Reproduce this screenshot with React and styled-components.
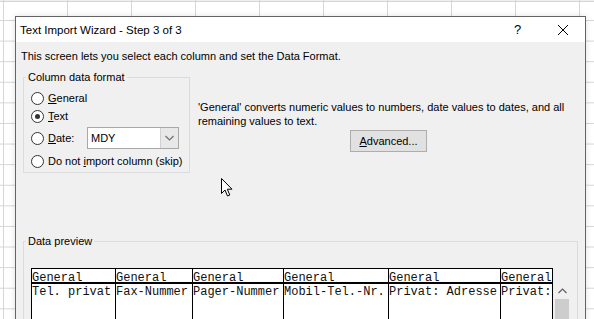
import styled, { createGlobalStyle } from 'styled-components';

const uiFont = '"Liberation Sans", Arial, sans-serif';
const monoFont = '"Liberation Mono", "Courier New", monospace';

const GlobalStyle = createGlobalStyle`
  html, body {
    margin: 0;
    padding: 0;
    height: 100%;
    overflow: hidden;
  }
  body {
    background-color: #fff;
    background-image:
      linear-gradient(#d6d6d6, #d6d6d6),
      linear-gradient(to right, #d6d6d6 1px, transparent 1px),
      linear-gradient(to bottom, #d6d6d6 1px, transparent 1px);
    background-size: 100% 1px, 64px 100%, 100% 20.6px;
    background-position: 0 1px, 3px 0, 0 20px;
    background-repeat: no-repeat, repeat-x, repeat-y;
    font-family: ${uiFont};
  }
`;

const Screen = styled.div`
  position: relative;
  box-sizing: border-box;
  height: 319px;
  padding: 16px 0 0 15px;
`;

const Dialog = styled.div`
  width: 571px;
  height: 320px;
  box-sizing: border-box;
  border: 1px solid #646464;
  border-bottom: none;
  background: #f0f0f0;
  display: flex;
  flex-direction: column;
  box-shadow: 0 0 6px rgba(0, 0, 0, 0.12);
`;

const TitleBar = styled.div`
  height: 25px;
  flex: none;
  background: #fff;
  display: flex;
  align-items: center;
`;

const Title = styled.div`
  flex: 1;
  padding-left: 4px;
  font-size: 11.5px;
  color: #000;
`;

const TitleButton = styled.div`
  width: 45px;
  height: 25px;
  display: flex;
  align-items: center;
  justify-content: center;
  font-size: 13px;
  color: #000;
`;

const Body = styled.div`
  flex: 1;
  padding: 7px 0 0 5px;
  font-size: 11px;
  color: #000;
`;

const Intro = styled.div`
  line-height: 15px;
`;

const OptionsRow = styled.div`
  display: flex;
  align-items: flex-start;
  margin-top: 6px;
`;

const Group = styled.fieldset`
  box-sizing: border-box;
  flex: none;
  width: ${(p) => p.$w}px;
  margin: ${(p) => p.$mt || 0}px 0 0 2px;
  padding: ${(p) => p.$pt}px 0 ${(p) => p.$pb || 0}px 2px;
  border: 1px solid #dcdcdc;
  min-width: 0;
`;

const Legend = styled.legend`
  padding: 0 2px;
  font-size: 11px;
  line-height: 14px;
`;

const RadioRow = styled.div`
  display: flex;
  align-items: center;
  height: ${(p) => p.$h}px;
  margin-top: ${(p) => p.$mt || 0}px;
  padding-left: 5px;
`;

const Radio = styled.span`
  width: 13px;
  height: 13px;
  box-sizing: border-box;
  border: 1px solid #333;
  border-radius: 50%;
  background: #fff;
  display: grid;
  place-items: center;
  flex: none;
  &::after {
    content: '';
    width: 5px;
    height: 5px;
    border-radius: 50%;
    background: ${(p) => (p.$checked ? '#333' : 'transparent')};
  }
`;

const RadioLabel = styled.span`
  margin-left: 4px;
  width: ${(p) => (p.$w ? `${p.$w}px` : 'auto')};
  flex: none;
  white-space: nowrap;
`;

const Key = styled.span`
  text-decoration: underline;
  text-underline-offset: 1px;
`;

const Select = styled.div`
  width: 92px;
  height: 22px;
  box-sizing: border-box;
  border: 1px solid #a8a8a8;
  background: #fff;
  display: flex;
`;

const SelectValue = styled.div`
  flex: 1;
  padding-left: 3px;
  line-height: 20px;
`;

const SelectButton = styled.div`
  width: 17px;
  background: #e8e8e8;
  border-left: 1px solid #d0d0d0;
  display: flex;
  align-items: center;
  justify-content: center;
`;

const InfoColumn = styled.div`
  margin-left: 8px;
  padding-top: 31px;
`;

const InfoLine = styled.div`
  line-height: 13.5px;
  white-space: nowrap;
`;

const Button = styled.div`
  width: 77px;
  height: 22px;
  box-sizing: border-box;
  margin: 2px 0 0 152px;
  border: 1px solid #adadad;
  background: #e1e1e1;
  display: flex;
  align-items: center;
  justify-content: center;
`;

const PreviewRow = styled.div`
  display: flex;
  align-items: flex-start;
  margin-left: 5px;
`;

const Table = styled.div`
  display: flex;
  height: 60px;
  border: 1px solid #000;
  border-bottom: none;
`;

const Column = styled.div`
  width: ${(p) => p.$w}px;
  flex: none;
  border-right: ${(p) => (p.$last ? 'none' : '1px solid #000')};
  background: #fff;
  font-family: ${monoFont};
  font-size: 12px;
  color: #111;
  white-space: pre;
  overflow: hidden;
`;

const Head = styled.div`
  box-sizing: border-box;
  height: 15px;
  padding-top: 3px;
  line-height: 13px;
  border-bottom: 2px solid #000;
  overflow: hidden;
`;

const Cell = styled.div`
  padding-top: 1px;
  line-height: 14px;
`;

const Scrollbar = styled.div`
  width: 14px;
  margin: 15px 0 0 2px;
  display: flex;
  flex-direction: column;
`;

const ScrollArrow = styled.div`
  height: 16px;
  display: flex;
  align-items: center;
  justify-content: center;
`;

const Thumb = styled.div`
  height: 30px;
  background: #cdcdcd;
`;

const Pointer = styled.svg`
  position: absolute;
  left: 220px;
  top: 177px;
`;

const columns = [
  { w: 83, text: 'Tel. privat' },
  { w: 76, text: 'Fax-Nummer' },
  { w: 90, text: 'Pager-Nummer' },
  { w: 104, text: 'Mobil-Tel.-Nr.' },
  { w: 111, text: 'Privat: Adresse' },
  { w: 51, text: 'Privat:' },
];

const Chevron = ({ up }) => (
  <svg width="9" height="6" viewBox="0 0 9 6">
    <path
      d={up ? 'M0.5 5 L4.5 1 L8.5 5' : 'M0.5 1 L4.5 5 L8.5 1'}
      fill="none"
      stroke={up ? '#606060' : '#707070'}
      strokeWidth="1.2"
    />
  </svg>
);

export default function App() {
  return (
    <>
      <GlobalStyle />
      <Screen>
        <Dialog>
          <TitleBar>
            <Title>Text Import Wizard - Step 3 of 3</Title>
            <TitleButton>?</TitleButton>
            <TitleButton>
              <svg width="10" height="10" viewBox="0 0 10 10">
                <path d="M0 0 L10 10 M10 0 L0 10" stroke="#000" strokeWidth="1" />
              </svg>
            </TitleButton>
          </TitleBar>
          <Body>
            <Intro>This screen lets you select each column and set the Data Format.</Intro>
            <OptionsRow>
              <Group $w={167} $pt={5} $pb={1}>
                <Legend>Column data format</Legend>
                <RadioRow $h={18}>
                  <Radio />
                  <RadioLabel>
                    <Key>G</Key>eneral
                  </RadioLabel>
                </RadioRow>
                <RadioRow $h={18}>
                  <Radio $checked />
                  <RadioLabel>
                    <Key>T</Key>ext
                  </RadioLabel>
                </RadioRow>
                <RadioRow $h={22} $mt={2}>
                  <Radio />
                  <RadioLabel $w={39}>
                    <Key>D</Key>ate:
                  </RadioLabel>
                  <Select>
                    <SelectValue>MDY</SelectValue>
                    <SelectButton>
                      <Chevron />
                    </SelectButton>
                  </Select>
                </RadioRow>
                <RadioRow $h={20} $mt={2}>
                  <Radio />
                  <RadioLabel>
                    Do not <Key>i</Key>mport column (skip)
                  </RadioLabel>
                </RadioRow>
              </Group>
              <InfoColumn>
                <InfoLine>
                  'General' converts numeric values to numbers, date values to dates, and all
                </InfoLine>
                <InfoLine>remaining values to text.</InfoLine>
                <Button>
                  <span>
                    <Key>A</Key>dvanced...
                  </span>
                </Button>
              </InfoColumn>
            </OptionsRow>
            <Group $w={555} $pt={20} $mt={61}>
              <Legend>Data preview</Legend>
              <PreviewRow>
                <Table>
                  {columns.map((c, i) => (
                    <Column key={c.text} $w={c.w} $last={i === columns.length - 1}>
                      <Head>General</Head>
                      <Cell>{c.text}</Cell>
                    </Column>
                  ))}
                </Table>
                <Scrollbar>
                  <ScrollArrow>
                    <Chevron up />
                  </ScrollArrow>
                  <Thumb />
                </Scrollbar>
              </PreviewRow>
            </Group>
          </Body>
        </Dialog>
        <Pointer width="13" height="21" viewBox="0 0 13 21">
          <path
            d="M1.5 1.5 L1.5 16.5 L5 13 L7.5 19 L9.8 18 L7.3 12.2 L12 12.2 Z"
            fill="#fff"
            stroke="#000"
            strokeWidth="1"
            strokeLinejoin="miter"
          />
        </Pointer>
      </Screen>
    </>
  );
}
